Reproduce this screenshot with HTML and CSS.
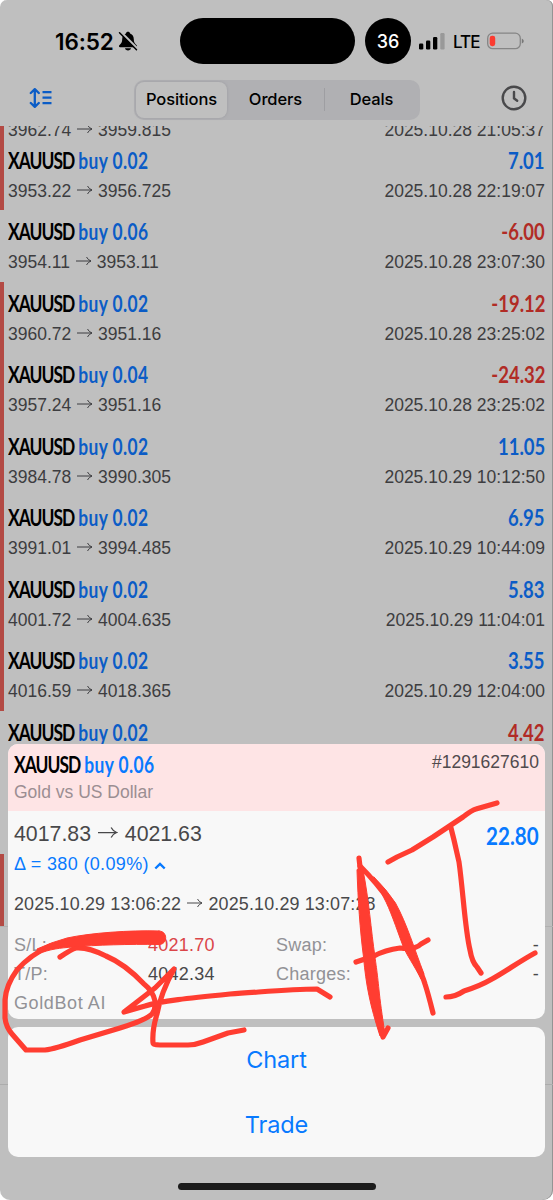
FILE: index.html
```html
<!DOCTYPE html>
<html lang="en">
<head>
<meta charset="utf-8">
<title>Positions</title>
<link rel="stylesheet" href="styles.css">
</head>
<body>
<svg class="defs" width="0" height="0"><symbol id="arrow" viewBox="0 0 16 10"><path d="M0 5H15M10.500 1Q12 4 15 5Q12 6 10.500 9" fill="none" stroke="currentColor" stroke-width="1"/></symbol></svg>
<div class="screen">
  <header class="status">
    <div class="time">16:52</div>
    <svg class="bell" width="20" height="20" viewBox="0 0 20 20"><path d="M10 .8c-1.100 0-1.900.7-2.100 1.600C5.200 3.400 4.200 5.600 4.200 8.200c0 3.300-1 4.300-2.900 6.100-.7.8-.3 1.900.8 1.900h15.800c1.100 0 1.500-1.100.8-1.900-1.900-1.800-2.900-2.800-2.900-6.100 0-2.600-1-4.800-3.700-5.800C11.900 1.500 11.100.8 10 .8zM7 17.200h6c-.2 1.400-1.500 2.200-3 2.200s-2.800-.8-3-2.200z"/><path d="M2.500 .8L19.500 17.800" stroke="#bfbfbf" stroke-width="2.600"/><path d="M1.500 1.800L18.500 18.800" stroke="#000" stroke-width="1.500" stroke-linecap="round"/></svg>
    <div class="island"></div>
    <div class="badge">36</div>
    <svg class="signal" width="26" height="17" viewBox="0 0 26 17"><rect x="0" y="10.500" width="4.300" height="6" rx="1.200"/><rect x="7" y="7.500" width="4.300" height="9" rx="1.200"/><rect x="14" y="4" width="4.300" height="12.500" rx="1.200"/><rect x="21.300" y="0" width="4.300" height="16.500" rx="1.200" fill="#999"/></svg>
    <div class="lte">LTE</div>
    <svg class="battery" width="37" height="18" viewBox="0 0 37 18"><rect x=".7" y="1.200" width="32.600" height="15.500" rx="5" fill="none" stroke="#858585" stroke-width="1.300"/><rect x="2.700" y="3.700" width="5.500" height="10.500" rx="2.400" fill="#fb3b30"/><path d="M34.800 6.500q2 1 2 2.500t-2 2.500z" fill="#777"/></svg>
  </header>
  <nav class="toolbar">
    <svg class="sort" width="23" height="20" viewBox="0 0 23 20" fill="none" stroke="#0b5cc6" stroke-width="2.300" stroke-linecap="round" stroke-linejoin="round"><path d="M5.800 1.500V18.500M1.800 5L5.800 1.200L9.800 5M1.800 15L5.800 18.800L9.800 15"/><path d="M13.500 4.200H22.500M13.500 9.700H22.500M13.500 15.200H22.500" stroke-linecap="butt"/></svg>
    <div class="segments"><div class="seg active">Positions</div><div class="seg orders">Orders</div><i class="divider"></i><div class="seg">Deals</div></div>
    <svg class="clock" width="26" height="26" viewBox="0 0 26 26" fill="none" stroke="#49494b" stroke-width="2.400" stroke-linecap="round"><circle cx="13" cy="13" r="11.300"/><path d="M13 7V13.300L16.200 15.700"/></svg>
  </nav>
  <main class="list">
    <div class="row marked partial"><div class="sub"><span>3962.74 <svg class="arr"><use href="#arrow"/></svg> 3959.815</span><span>2025.10.28 21:05:37</span></div></div>
    <div class="row marked"><div class="main"><span class="name">XAUUSD <b>buy 0.02</b></span><span class="profit">7.01</span></div><div class="sub"><span>3953.22 <svg class="arr"><use href="#arrow"/></svg> 3956.725</span><span>2025.10.28 22:19:07</span></div></div>
    <div class="row"><div class="main"><span class="name">XAUUSD <b>buy 0.06</b></span><span class="profit loss">-6.00</span></div><div class="sub"><span>3954.11 <svg class="arr"><use href="#arrow"/></svg> 3953.11</span><span>2025.10.28 23:07:30</span></div></div>
    <div class="row marked"><div class="main"><span class="name">XAUUSD <b>buy 0.02</b></span><span class="profit loss">-19.12</span></div><div class="sub"><span>3960.72 <svg class="arr"><use href="#arrow"/></svg> 3951.16</span><span>2025.10.28 23:25:02</span></div></div>
    <div class="row marked"><div class="main"><span class="name">XAUUSD <b>buy 0.04</b></span><span class="profit loss">-24.32</span></div><div class="sub"><span>3957.24 <svg class="arr"><use href="#arrow"/></svg> 3951.16</span><span>2025.10.28 23:25:02</span></div></div>
    <div class="row marked"><div class="main"><span class="name">XAUUSD <b>buy 0.02</b></span><span class="profit">11.05</span></div><div class="sub"><span>3984.78 <svg class="arr"><use href="#arrow"/></svg> 3990.305</span><span>2025.10.29 10:12:50</span></div></div>
    <div class="row marked"><div class="main"><span class="name">XAUUSD <b>buy 0.02</b></span><span class="profit">6.95</span></div><div class="sub"><span>3991.01 <svg class="arr"><use href="#arrow"/></svg> 3994.485</span><span>2025.10.29 10:44:09</span></div></div>
    <div class="row marked"><div class="main"><span class="name">XAUUSD <b>buy 0.02</b></span><span class="profit">5.83</span></div><div class="sub"><span>4001.72 <svg class="arr"><use href="#arrow"/></svg> 4004.635</span><span>2025.10.29 11:04:01</span></div></div>
    <div class="row marked"><div class="main"><span class="name">XAUUSD <b>buy 0.02</b></span><span class="profit">3.55</span></div><div class="sub"><span>4016.59 <svg class="arr"><use href="#arrow"/></svg> 4018.365</span><span>2025.10.29 12:04:00</span></div></div>
    <div class="row"><div class="main"><span class="name">XAUUSD <b>buy 0.02</b></span><span class="profit loss">4.42</span></div></div>
    <div class="row"></div>
    <div class="row marked"></div>
    <div class="summary"><span>Swap</span><span>0.00</span></div>
  </main>

  <section class="sheet">
    <div class="card details">
      <div class="card-head">
        <div><div class="name">XAUUSD <b>buy 0.06</b></div><div class="desc">Gold vs US Dollar</div></div>
        <div class="ticket">#1291627610</div>
      </div>
      <div class="card-body">
        <div class="prices"><span>4017.83 <svg class="arr big"><use href="#arrow"/></svg> 4021.63</span><span class="profit">22.80</span></div>
        <div class="delta">Δ = 380 (0.09%) <svg width="12" height="8" viewBox="0 0 12 8"><path d="M1.300 6.500L6 2L10.700 6.500" fill="none" stroke="currentColor" stroke-width="2.400"/></svg></div>
        <div class="period">2025.10.29 13:06:22 <svg class="arr"><use href="#arrow"/></svg> 2025.10.29 13:07:28</div>
        <div class="grid">
          <span>S/L:</span><span class="stop">4021.70</span><span>Swap:</span><span class="value">-</span>
          <span>T/P:</span><span class="value">4042.34</span><span>Charges:</span><span class="value">-</span>
          <span class="comment">GoldBot AI</span>
        </div>
      </div>
    </div>
    <div class="card actions"><div>Chart</div><div>Trade</div></div>
    <div class="home"></div>
  </section>

  <svg class="ink" width="553" height="1200" viewBox="0 0 553 1200">
    <path d="M50 946Q30 955 17 970Q6 985 5 1000L5 1018Q6 1027 12 1034L26 1050H45Q55 1049 80 1040L120 1028Q146 1020 152 1014Q156 1009 155 1001Q153 991 144 984Q125 964 106 956Q88 947 76 948Q72 949 60 957"/>
    <path class="fill" d="M159 931C130 930 90 933 67 938Q52 942 37 949L38 954C50 949 60 948 73 947C95 945 130 944 159 944.500C168 944.500 168 931 159 931Z"/>
    <path d="M330 997L317 989C290 989 262 992 230 994C190 998 160 1001 145 1006L124 1012L155 988L174 969C165 985 160 998 157 1014Q152 1030 153 1043Q153 1045 160 1045H188Q195 1045 203 1042L228 1033L244 1030"/>
    <path class="fill" d="M357 870C358 900 360 930 363.500 957C366 985 370 1005 380 1036L385 1034C382 1015 380 1000 379 990C377 970 376 965 375 957C371 930 369 900 363 870Z"/>
    <path d="M359 858L361 876M381 1030L383 1037L388 1028"/>
    <path d="M360 866Q376 882 391 903C398 915 404 930 409 946C415 961 422 973 425 984Q428 993 433 1013"/>
    <path class="fill" d="M374 877Q387 890 395.500 903C407 924 414 948 424 974L421 979C414 965 406 954 403 946C396 927 390 909 384 898Z"/>
    <path d="M356 962L374 956Q385 950 400 948Q415 950 421 944L428 940"/>
    <path d="M388 862L397 857L412 850L433 837L463 817Q472 810 476 809L497 803M451 828L454 840L459 862C463 890 465 930 470 950Q472 962 477 967L481 973M446 997Q455 997 464 991Q480 986 492 979C505 972 520 961 535 953"/>
  </svg>
</div>
</body>
</html>
```
FILE: styles.css
```css
body { margin: 0; background: #fff; font-family: "Liberation Sans", Arial, sans-serif; }
* { box-sizing: border-box; }
.defs { position: absolute; }
.screen { position: relative; width: 553px; height: 1200px; overflow: hidden; background: #bfbfbf; border-radius: 7px 6px 10px 10px; box-shadow: inset -1px 0 #949494; display: flex; flex-direction: column; }
.status { height: 76px; flex: none; display: flex; align-items: center; padding: 6px 0 0 55px; font-family: Inter, sans-serif; }
.time { width: 62px; font-size: 22.500px; font-weight: 600; letter-spacing: -.1px; }
.bell { width: 20px; margin-left: 1px; }
.island { width: 175px; height: 46px; border-radius: 23px; background: #000; margin-left: 42px; }
.badge { width: 46px; height: 46px; border-radius: 50%; background: #000; color: #fff; margin-left: 10px; display: flex; align-items: center; justify-content: center; font-size: 18px; font-weight: 500; }
.signal { margin-left: 8px; }
.lte { margin-left: 8px; width: 34px; font-size: 17px; font-weight: 500; letter-spacing: -.9px; padding-top: 1px; }
.toolbar { height: 50px; flex: none; display: flex; align-items: center; padding: 0 26px 4px 29px; font-family: Inter, sans-serif; }
.sort { margin-top: -2px; }
.segments { width: 286px; height: 40px; margin: 1px 0 0 82px; padding: 2px; border-radius: 10px; background: #b0b0b3; display: flex; align-items: center; }
.seg { flex: 1; text-align: center; font-size: 16.500px; font-weight: 500; line-height: 34px; padding-bottom: 2px; letter-spacing: -.1px; }
.seg.active { flex: 0 0 91px; height: 36px; border-radius: 8px; background: #bfbfbf; box-shadow: 0 0 3px #9a9aa0; }
.seg.orders { flex: 0 0 97px; }
.divider { width: 1px; height: 23px; background: #9e9ea2; }
.clock { margin: -2px 0 0 auto; }
.list { flex: 1; overflow: hidden; }
.row { height: 71.550px; padding: 8px; }
.row.partial { height: 23.550px; padding-top: 0; }
.partial .sub { margin-top: -11px; }
.marked { background: linear-gradient(#b34a44, #b34a44) 0 0 / 4px 100% no-repeat; }
.main { height: 28px; margin-bottom: 1px; display: flex; justify-content: space-between; align-items: center; }
.name, .profit { font-family: Lato, sans-serif; font-weight: 700; font-size: 22px; line-height: 28px; white-space: pre; }
.name { transform: scaleX(.79); transform-origin: left; letter-spacing: -1.200px; word-spacing: 1px; }
.name b { font-weight: 700; color: #0b5cc6; letter-spacing: .500px; word-spacing: 0; }
.profit { transform: scaleX(.84); transform-origin: right; color: #0b5cc6; }
.loss { color: #b12b25; }
.sub { height: 29px; line-height: 30px; display: flex; justify-content: space-between; font-size: 17.500px; color: #3d3d40; }
.arr { width: 16px; height: 10px; vertical-align: 2px; margin: 0 0 0 1px; }
.summary { height: 159px; border-top: 1px solid #b0b0b0; border-bottom: 1px solid #acacac; padding: 69px 8px 0; display: flex; justify-content: space-between; font: 500 17px/24px Inter, sans-serif; }
.sheet { position: absolute; left: 8px; top: 744px; width: 537px; display: flex; flex-direction: column; gap: 8px; }
.card { border-radius: 10px; background: #f8f8f8; overflow: hidden; }
.details { height: 275px; }
.card-head { height: 67px; background: #fee4e5; padding: 7px 6px 0; display: flex; justify-content: space-between; }
.sheet .name b, .sheet .profit { color: #087aff; }
.desc { margin-top: 2px; font-size: 17.500px; line-height: 22px; color: #9b8e92; }
.ticket { font-size: 17.500px; line-height: 22px; color: #504a4d; }
.card-body { padding: 8px 6px 0; color: #48484a; }
.prices { height: 31px; line-height: 30px; display: flex; justify-content: space-between; font-size: 21.300px; }
.prices .profit { font-size: 24.500px; line-height: 34px; }
.arr.big { width: 20px; height: 13px; margin-right: 1px; }
.delta { height: 28px; line-height: 29px; font-size: 18px; letter-spacing: .350px; color: #087aff; }
.period { margin-top: 11px; height: 30px; line-height: 30px; font-size: 17.900px; letter-spacing: .160px; }
.grid { margin-top: 11px; display: grid; grid-template-columns: 134px 128px 1fr 30px; grid-auto-rows: 29px; line-height: 30px; font-size: 18px; letter-spacing: .250px; color: #929296; }
.value { color: #48484a; }
.value:nth-child(4n) { text-align: right; }
.stop { color: #db4549; }
.comment { letter-spacing: .600px; }
.actions { height: 130px; color: #087aff; font: 400 23.500px/65px Inter, sans-serif; letter-spacing: -.100px; text-align: center; }
.home { width: 198px; height: 7px; border-radius: 4px; background: #1b1b1b; margin: 18px auto 0; }
.ink { position: absolute; left: 0; top: 0; fill: none; stroke: #ff3d31; stroke-width: 5.200; stroke-linecap: round; stroke-linejoin: round; }
.ink .fill { fill: #ff3d31; stroke-width: 1; }
```
